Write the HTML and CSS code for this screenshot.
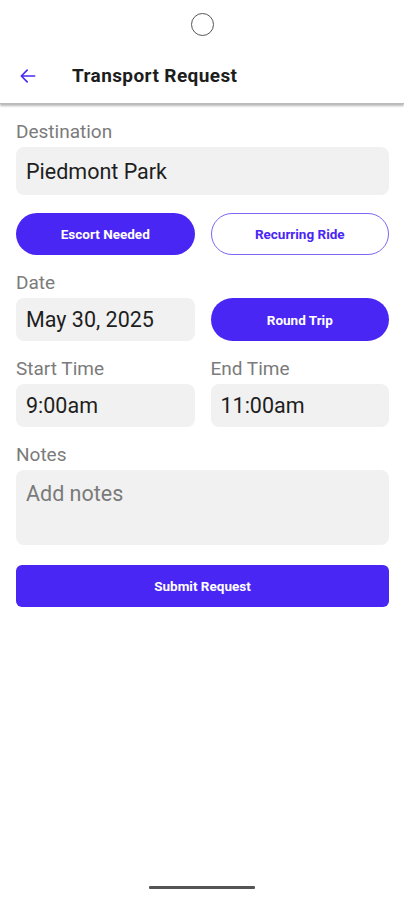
FILE: index.html
```html
<!DOCTYPE html>
<html>
<head>
<meta charset="utf-8">
<link rel="stylesheet" href="styles.css">
</head>
<body>
<div class="screen">
  <div class="status"><div class="camera"></div></div>
  <header class="appbar">
    <svg class="back" width="20" height="20" viewBox="0 0 24 24"><path d="M20 12H4.5M11 5l-7 7 7 7" fill="none" stroke="#4a2cf0" stroke-width="2" stroke-linecap="round" stroke-linejoin="round"/></svg>
    <h1 class="title">Transport Request</h1>
  </header>
  <main class="form">
    <div class="field">
      <div class="label">Destination</div>
      <div class="input big">Piedmont Park</div>
    </div>
    <div class="row">
      <div class="pill solid">Escort Needed</div>
      <div class="pill outline">Recurring Ride</div>
    </div>
    <div class="field">
      <div class="label">Date</div>
      <div class="row">
        <div class="input">May 30, 2025</div>
        <div class="pill solid">Round Trip</div>
      </div>
    </div>
    <div class="row">
      <div class="field">
        <div class="label">Start Time</div>
        <div class="input">9:00am</div>
      </div>
      <div class="field">
        <div class="label">End Time</div>
        <div class="input">11:00am</div>
      </div>
    </div>
    <div class="field">
      <div class="label">Notes</div>
      <div class="input notes">Add notes</div>
    </div>
    <div class="submit">Submit Request</div>
  </main>
  <div class="spacer"></div>
  <div class="homebar"></div>
</div>
</body>
</html>
```

FILE: styles.css
```css
html, body { margin: 0; padding: 0; background: #fff; }
body { font-family: Roboto, "Noto Sans", sans-serif; color: #222; }
.screen { width: 404px; height: 900px; display: flex; flex-direction: column; }
.status { height: 50px; display: flex; justify-content: center; align-items: flex-start; padding-top: 13px; box-sizing: border-box; }
.camera { width: 23px; height: 23px; border-radius: 50%; border: 1.5px solid #555; box-sizing: border-box; }
.appbar { height: 54px; display: flex; align-items: center; padding-left: 18px; padding-bottom: 2px; box-shadow: 0 2px 2px rgba(0,0,0,0.28); border-bottom: 1px solid #bbb; box-sizing: border-box; }
.title { margin: 0 0 0 34px; font-size: 19px; font-weight: 700; color: #1d1d1d; letter-spacing: 0.4px; }
.form { padding: 18px 15px 0 16px; display: flex; flex-direction: column; gap: 18px; }
.field { display: flex; flex-direction: column; min-width: 0; }
.label { font-size: 19px; color: #7b7b7b; line-height: 20px; margin-bottom: 5px; }
.input { min-width: 0; background: #f1f1f1; border-radius: 8px; height: 43px; display: flex; align-items: center; padding-left: 10px; font-size: 21.5px; color: #1e1e1e; box-sizing: border-box; }
.input.big { height: 48px; }
.input.notes { height: 75px; align-items: flex-start; padding-top: 11px; color: #7a7a7a; }
.row { display: grid; grid-template-columns: 1fr 1fr; gap: 16px; }
.pill { min-width: 0; height: 42px; border-radius: 21px; display: flex; align-items: center; justify-content: center; font-size: 13.5px; font-weight: 700; box-sizing: border-box; }
.field .pill { height: 43px; border-radius: 22px; }
.pill.solid { background: #4a26f5; color: #fff; }
.pill.outline { border: 1px solid #7d68f3; color: #4a26f5; background: #fff; }
.submit { margin-top: 2px; height: 42px; background: #4a26f5; border-radius: 6px; color: #fff; font-size: 13.5px; font-weight: 700; display: flex; align-items: center; justify-content: center; }
.spacer { flex: 1; }
.homebar { width: 106px; height: 3px; background: #555; margin: 0 auto 11px; border-radius: 1px; }
```
